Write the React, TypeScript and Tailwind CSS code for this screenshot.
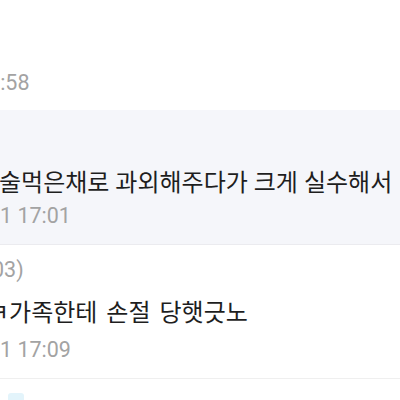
import React from 'react';

const font = { fontFamily: 'Roboto, "Noto Sans CJK KR", sans-serif' };

const App: React.FC = () => {
  return (
    <div className="w-[400px] h-[400px] overflow-hidden bg-white flex flex-col" style={font}>
      {/* previous comment tail */}
      <div className="h-[110px] shrink-0 pt-[71px]">
        <div className="-ml-[24px] text-[21.5px] leading-[24px] text-[#a3a3a3] whitespace-nowrap">16:58</div>
      </div>

      {/* highlighted comment */}
      <div className="h-[135px] shrink-0 bg-[#f5f6fa] border-b border-[#ebebef] pt-[58px]">
        <div className="-ml-[1px] text-[24px] leading-[30px] text-[#1e1e1e] whitespace-nowrap [word-spacing:0px]">
          술먹은채로 과외해주다가 크게 실수해서
        </div>
        <div className="mt-[6px] text-[21.5px] leading-[24px] text-[#a3a3a3] whitespace-nowrap">1 17:01</div>
      </div>

      {/* reply */}
      <div className="shrink-0 pt-[13px] pb-[16px] border-b border-[#efefef]">
        <div className="-ml-[8px] text-[21.5px] leading-[24px] text-[#a3a3a3] whitespace-nowrap">03)</div>
        <div className="mt-[16px] -ml-[13px] text-[24px] leading-[30px] text-[#1e1e1e] whitespace-nowrap [word-spacing:3px]">
          ㅋ가족한테 손절 당햇긋노
        </div>
        <div className="mt-[10px] text-[21.5px] leading-[24px] text-[#a3a3a3] whitespace-nowrap">1 17:09</div>
      </div>

      <div className="pt-[14px] pl-[8px]">
        <div className="w-[16px] h-[16px] rounded-[3px] bg-[#e3f4fb]" />
      </div>
    </div>
  );
};

export default App;
